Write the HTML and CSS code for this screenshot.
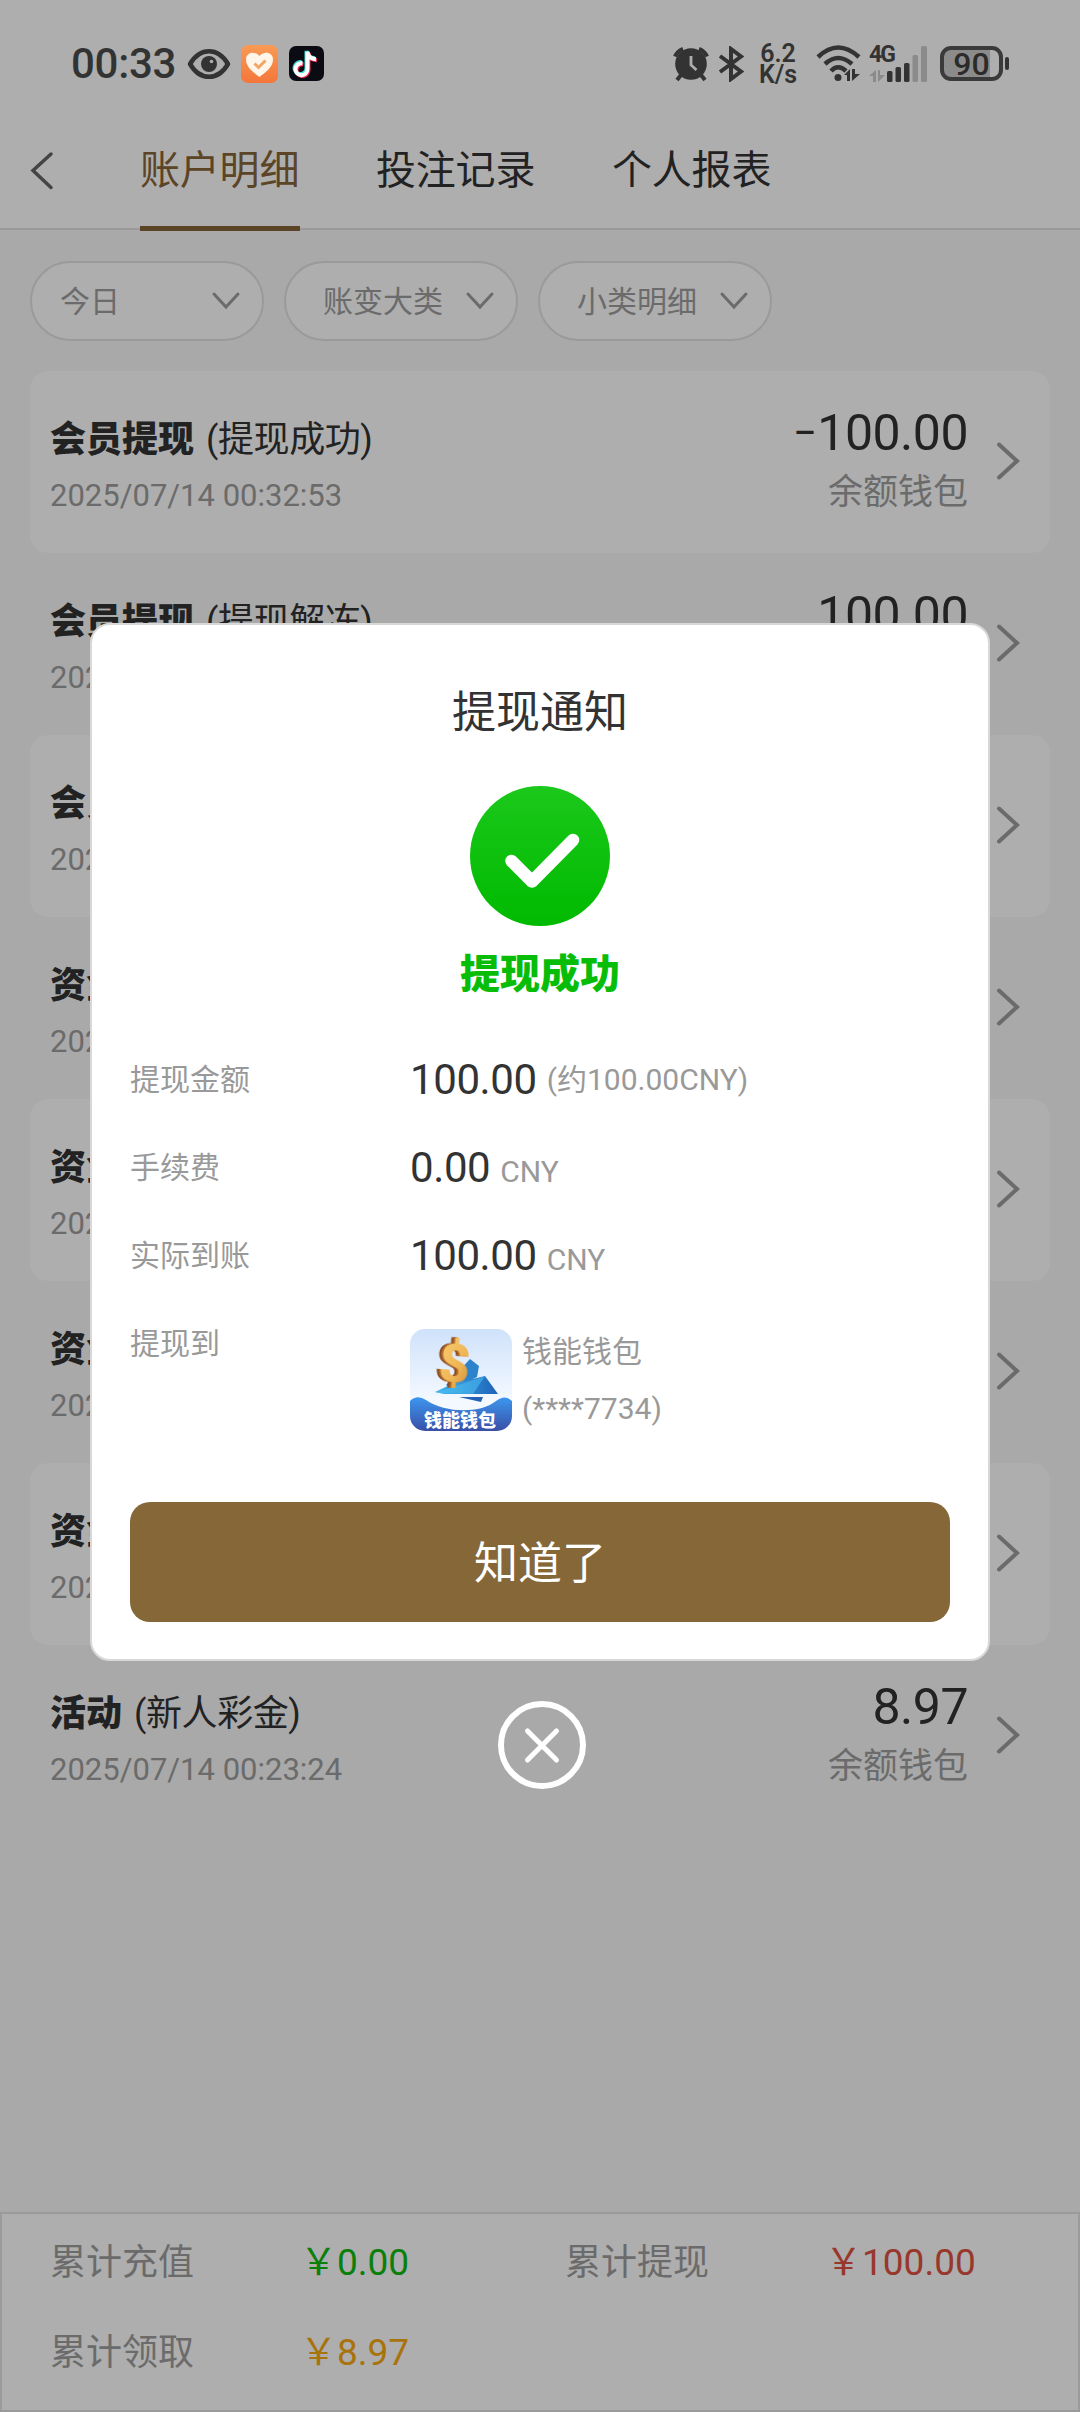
FILE: index.html
```html
<!DOCTYPE html>
<html lang="zh-CN">
<head>
<meta charset="utf-8">
<title>账户明细</title>
<link rel="stylesheet" href="styles.css">
</head>
<body>
<svg width="0" height="0" class="defs">
  <symbol id="chev-right" viewBox="0 0 24 40"><path d="M3 3.5 L21 20 L3 36.500"/></symbol>
  <symbol id="chev-down" viewBox="0 0 30 20"><path d="M3 3 L15 16 L27 3"/></symbol>
</svg>
<div class="screen">
  <header class="top">
    <div class="status">
      <span class="clock">00:33</span>
      <svg class="eye" width="44" height="30" viewBox="0 0 44 30"><path d="M3 15 C13 -2 31 -2 41 15 C31 32 13 32 3 15 Z" fill="none" stroke="#333" stroke-width="4.500" stroke-linejoin="round"/><circle cx="22" cy="15" r="8" fill="#333"/><circle cx="24.500" cy="12.500" r="1.800" fill="#aeaeae"/></svg>
      <svg class="health" width="38" height="38" viewBox="0 0 38 38"><defs><linearGradient id="og" x2="0" y2="1"><stop stop-color="#f89a55"/><stop offset="1" stop-color="#f4763a"/></linearGradient></defs><rect width="37" height="38" rx="7" fill="url(#og)"/><path d="M18.500 32 C12 27 5 22 5 14.500 C5 7 14 5.500 18.500 11 C23 5.500 32 7 32 14.500 C32 22 25 27 18.500 32 Z" fill="#fff5e8"/><path d="M13.500 18.500 L17.500 22.500 L24.500 15.500" fill="none" stroke="#f3a564" stroke-width="3"/></svg>
      <svg class="note" width="35" height="35" viewBox="0 0 35 35"><rect width="35" height="35" rx="7" fill="#0b0b14"/><g fill="none" stroke-width="4"><path d="M18 5.500 V23 A6 6 0 1 1 13 17 M18 5.500 Q19 12.500 26.500 13" stroke="#3ee0dc" transform="translate(-.5 -.8)"/><path d="M18 5.500 V23 A6 6 0 1 1 13 17 M18 5.500 Q19 12.500 26.500 13" stroke="#ee2c55" transform="translate(1.500 1.300)"/><path d="M18 5.500 V23 A6 6 0 1 1 13 17 M18 5.500 Q19 12.500 26.500 13" stroke="#fff" transform="translate(.5 .3)"/></g></svg>
      <span class="fill"></span>
      <svg width="36" height="36" viewBox="0 0 36 36"><g fill="none" stroke="#333" stroke-width="4"><path d="M2 10.500 A14 14 0 0 1 10 2.800"/><path d="M34 10.500 A14 14 0 0 0 26 2.800"/><path d="M8 29 L4 34 M28 29 L32 34"/></g><circle cx="18" cy="18" r="15.800" fill="#333"/><path d="M18 10 V19 L23.500 24" fill="none" stroke="#aeaeae" stroke-width="2.800"/></svg>
      <svg class="bt" width="26" height="36" viewBox="0 0 26 36"><path d="M2 10 L23 25.500 L13 33 V3 L23 10.500 L2 26" fill="none" stroke="#333" stroke-width="4"/></svg>
      <span class="speed"><span>6.2</span><span>K/s</span></span>
      <svg class="wifi" width="46" height="37" viewBox="0 0 46 37"><g fill="none" stroke="#333" stroke-width="4.500"><path d="M2 12 Q22 -7 43 12"/><path d="M9 19 Q22 7 36 19"/><path d="M15 26 Q22 18.500 30 26"/></g><circle cx="22" cy="32.500" r="3.500" fill="#333"/><path d="M28 30 L34 24 V36 H31 V30 Z M36 24 H39 V29 H44 L36 36 Z" fill="#333"/></svg>
      <div class="cell"><svg width="62" height="36" viewBox="0 0 62 36"><path d="M1 30 L8 24 V36 H5 V30 Z M10 24 H12 V29 H17 L10 36 Z" fill="#8b8b8b"/><g fill="#333"><rect x="19" y="25" width="5.500" height="11" rx="1.500"/><rect x="27.500" y="21" width="5.500" height="15" rx="1.500"/><rect x="36" y="17" width="5.500" height="19" rx="1.500"/></g><g fill="#8b8b8b"><rect x="44.500" y="9" width="5.500" height="27" rx="1.500"/><rect x="53" y="0" width="6" height="36" rx="1.500"/></g></svg><span class="gen">4G</span></div>
      <div class="battery"><span class="level">90</span><i class="cap"></i></div>
    </div>
    <nav class="tabs">
      <svg class="back" width="26" height="40" viewBox="0 0 26 40"><path d="M23 3 L5 19.500 L23 36.500"/></svg>
      <span class="tab active">账户明细</span>
      <span class="tab">投注记录</span>
      <span class="tab">个人报表</span>
    </nav>
  </header>
  <div class="filters">
    <div class="pill wide"><span>今日</span><svg class="down"><use href="#chev-down"/></svg></div>
    <div class="pill"><span>账变大类</span><svg class="down"><use href="#chev-down"/></svg></div>
    <div class="pill"><span>小类明细</span><svg class="down"><use href="#chev-down"/></svg></div>
  </div>
  <main class="list">
    <div class="row"><div class="info"><div class="title"><b>会员提现</b><span>(提现成功)</span></div><div class="date">2025/07/14 00:32:53</div></div><div class="sum"><div class="amount"><span class="minus">−</span>100.00</div><div class="wallet">余额钱包</div></div><svg class="go"><use href="#chev-right"/></svg></div>
    <div class="row"><div class="info"><div class="title"><b>会员提现</b><span>(提现解冻)</span></div><div class="date">2025/07/14</div></div><div class="sum"><div class="amount">100.00</div></div><svg class="go"><use href="#chev-right"/></svg></div>
    <div class="row"><div class="info"><div class="title"><b>会员提现</b></div><div class="date">2025/07/14</div></div><svg class="go"><use href="#chev-right"/></svg></div>
    <div class="row"><div class="info"><div class="title"><b>资金</b></div><div class="date">2025/07/14</div></div><svg class="go"><use href="#chev-right"/></svg></div>
    <div class="row"><div class="info"><div class="title"><b>资金</b></div><div class="date">2025/07/14</div></div><svg class="go"><use href="#chev-right"/></svg></div>
    <div class="row"><div class="info"><div class="title"><b>资金</b></div><div class="date">2025/07/14</div></div><svg class="go"><use href="#chev-right"/></svg></div>
    <div class="row"><div class="info"><div class="title"><b>资金</b></div><div class="date">2025/07/14</div></div><svg class="go"><use href="#chev-right"/></svg></div>
    <div class="row"><div class="info"><div class="title"><b>活动</b><span>(新人彩金)</span></div><div class="date">2025/07/14 00:23:24</div></div><div class="sum"><div class="amount">8.97</div><div class="wallet">余额钱包</div></div><svg class="go"><use href="#chev-right"/></svg></div>
  </main>
  <footer class="totals">
    <span>累计充值</span><span class="green">￥0.00</span><span>累计提现</span><span class="red">￥100.00</span>
    <span>累计领取</span><span class="orange">￥8.97</span>
  </footer>
</div>

<div class="overlay">
  <section class="modal">
    <h1>提现通知</h1>
    <svg class="ok" width="140" height="140" viewBox="0 0 140 140"><defs><linearGradient id="gr" x2="0" y2="1"><stop stop-color="#1bc81b"/><stop offset="1" stop-color="#00ba00"/></linearGradient></defs><circle cx="70" cy="70" r="70" fill="url(#gr)"/><path d="M41.500 75 L62 95.500 L103 54" fill="none" stroke="#fff" stroke-width="12.500" stroke-linecap="round" stroke-linejoin="round"/></svg>
    <div class="result">提现成功</div>
    <dl class="details">
      <dt>提现金额</dt><dd><span class="num">100.00</span><span class="approx">(约100.00CNY)</span></dd>
      <dt>手续费</dt><dd><span class="num">0.00</span><span class="unit">CNY</span></dd>
      <dt>实际到账</dt><dd><span class="num">100.00</span><span class="unit">CNY</span></dd>
      <dt>提现到</dt>
      <dd class="target">
        <svg width="102" height="102" viewBox="0 0 102 102">
          <defs>
            <clipPath id="ic"><rect width="102" height="102" rx="15"/></clipPath>
            <linearGradient id="sky" x2="0" y2="1"><stop stop-color="#cfe2fb"/><stop offset=".7" stop-color="#f4f9ff"/></linearGradient>
            <linearGradient id="sea" x2="0" y2="1"><stop stop-color="#3c97ef"/><stop offset="1" stop-color="#3a4fa6"/></linearGradient>
            <linearGradient id="wing" x2="1" y2="0"><stop stop-color="#42b7ee"/><stop offset="1" stop-color="#1d62b8"/></linearGradient>
            <linearGradient id="gold" x2="1" y2="1"><stop stop-color="#f7ce74"/><stop offset=".6" stop-color="#efb554"/><stop offset="1" stop-color="#c9852f"/></linearGradient>
          </defs>
          <g clip-path="url(#ic)">
            <rect width="102" height="102" fill="url(#sky)"/>
            <path d="M60 30 L69 37 L67 48 L42 60 L36 56 Z" fill="#2b83cc"/>
            <path d="M25 63 L42 55 L75 47 L88 65 L34 65 Z" fill="url(#wing)"/>
            <path d="M25 64 L75 47 L63 65 Z" fill="#4cc0f3" opacity=".55"/>
            <text class="dollar" x="29" y="53" transform="rotate(4 45 34)">$</text>
            <path d="M49 68 H73 L71 73 Z" fill="#2461b4"/>
            <path d="M0 72 Q7 65 16 71 C36 85 72 84 86 72 Q95 65 102 72 V102 H0 Z" fill="url(#sea)"/>
            <text class="badge" x="14" y="98">钱能钱包</text>
          </g>
        </svg>
        <div class="account"><span>钱能钱包</span><span>(****7734)</span></div>
      </dd>
    </dl>
    <button class="confirm">知道了</button>
  </section>
  <svg class="close" width="88" height="88" viewBox="0 0 88 88"><circle cx="44" cy="44" r="41" stroke-width="6"/><path d="M29.500 30 L58.500 59 M58.500 30 L29.500 59" stroke-width="5" stroke-linecap="round"/></svg>
</div>
</body>
</html>
```
FILE: styles.css
```css
* { box-sizing: border-box; }
body {
  margin: 0;
  width: 1080px;
  height: 2412px;
  position: relative;
  overflow: hidden;
  font-family: Roboto, "Noto Sans CJK SC", sans-serif;
  color: #222;
}
svg { display: block; flex: none; }
.defs { position: absolute; }
.screen {
  height: 2412px;
  display: flex;
  flex-direction: column;
  background: #a9a9a9;
}
.top {
  height: 230px;
  background: #aeaeae;
  border-bottom: 2px solid #9a9a9a;
}

/* status bar */
.status {
  height: 127px;
  padding: 0 77px 0 71px;
  display: flex;
  align-items: center;
  color: #333;
}
.clock { font-size: 42px; font-weight: 500; line-height: 50px; letter-spacing: -0.3px; }
.eye { margin-left: 11px; }
.health { margin-left: 10px; }
.note { margin-left: 10px; }
.fill { flex: 1; }
.bt { margin-left: 9px; }
.speed {
  margin-left: 13px;
  width: 42px;
  display: flex;
  flex-direction: column;
  align-items: center;
  font-size: 25px;
  font-weight: 600;
  line-height: 21px;
}
.speed span { height: 21px; }
.wifi { margin-left: 17px; }
.cell { margin-left: 6px; position: relative; }
.gen {
  position: absolute;
  left: 1px;
  top: -2px;
  font-size: 23px;
  line-height: 22px;
  font-weight: 700;
  letter-spacing: -2px;
}
.battery {
  position: relative;
  margin-left: 10px;
  width: 63px;
  height: 35px;
  border: 4px solid #3a3a3a;
  border-radius: 11px;
  background: linear-gradient(90deg, #8b8b8b 46px, #aeaeae 46px);
}
.level {
  display: block;
  text-align: center;
  font-size: 32px;
  line-height: 28px;
  font-weight: 500;
  color: #2b2b2b;
}
.cap {
  position: absolute;
  right: -10px;
  top: 7px;
  width: 4px;
  height: 13px;
  border-radius: 2px;
  background: #333;
}

/* tabs */
.tabs { height: 104px; padding-left: 28px; display: flex; }
.back { margin: 24px 86px 0 0; fill: none; stroke: #444; stroke-width: 3.5; stroke-linecap: round; }
.tab {
  margin-right: 76px;
  height: 104px;
  padding-top: 19px;
  font-size: 40px;
  line-height: 50px;
  letter-spacing: -0.2px;
  width: 160px;
  white-space: nowrap;
}
.active { color: #5c4426; border-bottom: 5px solid #5c4426; }

/* filters */
.filters { margin: 31px 30px 30px; display: flex; gap: 20px; }
.pill {
  width: 234px;
  height: 80px;
  padding: 0 21px 4px 37px;
  display: flex;
  align-items: center;
  justify-content: space-between;
  border: 2px solid #9a9a9a;
  border-radius: 40px;
  background: #aeaeae;
  color: #6b6b6b;
  font-size: 30px;
}
.wide { padding-left: 28px; }
.down { width: 30px; height: 20px; margin-top: 3px; fill: none; stroke: #6b6b6b; stroke-width: 3; stroke-linecap: round; }

/* records */
.list { margin: 0 30px; }
.row { height: 182px; padding-left: 20px; display: flex; border-radius: 18px; }
.row:nth-child(odd) { background: #aeaeae; }
.info { flex: 1; padding-top: 44px; }
.title { display: flex; gap: 12px; font-size: 36px; line-height: 50px; }
.title b { font-weight: 900; }
.title span { letter-spacing: -0.4px; }
.date { margin-top: 11px; font-size: 31px; line-height: 40px; color: #6b6b6b; }
.sum { padding-top: 32px; text-align: right; }
.amount { font-size: 50px; line-height: 60px; letter-spacing: -0.5px; }
.minus { font-size: 42px; margin-right: 1px; vertical-align: 3px; line-height: 1; }
.wallet { margin-top: 8px; font-size: 35px; line-height: 44px; color: #6b6b6b; }
.go {
  width: 24px;
  height: 40px;
  margin: 70px 30px 0 28px;
  fill: none;
  stroke: #6b6b6b;
  stroke-width: 4;
  stroke-linecap: round;
}

/* totals */
.totals {
  margin-top: auto;
  height: 200px;
  padding: 0 48px 18px;
  display: grid;
  grid-template-columns: 250px 265px 260px 1fr;
  grid-template-rows: 90px 90px;
  align-items: center;
  border: 2px solid #9a9a9a;
  background: #aeaeae;
  color: #6b6b6b;
  font-size: 36px;
}
.green, .red, .orange { font-size: 37px; }
.green { color: #0a7f0a; }
.red { color: #98372c; }
.orange { color: #a8730b; }

/* dialog */
.overlay {
  position: absolute;
  inset: 0;
  padding-top: 623px;
  display: flex;
  flex-direction: column;
  align-items: center;
}
.modal {
  width: 900px;
  height: 1038px;
  padding: 58px 38px 0;
  display: flex;
  flex-direction: column;
  align-items: center;
  border: 2px solid #d8d8d8;
  border-radius: 20px;
  background: #fff;
  color: #333;
}
.modal h1 { margin: 0; font-size: 44px; line-height: 60px; font-weight: 400; }
.ok { margin-top: 43px; }
.result { margin-top: 24px; font-size: 40px; line-height: 50px; font-weight: 900; color: #08bd08; }
.details {
  margin: 36px 0 0;
  width: 820px;
  display: grid;
  grid-template-columns: 280px 1fr;
  grid-template-rows: 88px 88px 88px 202px;
  line-height: 88px;
  font-size: 30px;
  color: #999;
}
.details dd { margin: 0; display: flex; align-items: baseline; }
.num { font-size: 42px; letter-spacing: -0.4px; color: #333; margin-right: 10px; }
.approx { margin-top: -8px; align-self: flex-start; padding-top: 8px; }
.details .target { align-items: flex-start; gap: 10px; padding-top: 29px; }
.account { display: flex; flex-direction: column; line-height: 57px; margin-top: -6px; }
.dollar {
  font: 900 54px Roboto, sans-serif;
  fill: url(#gold);
  filter: drop-shadow(-1.5px 0.3px 0 #b06a2c) drop-shadow(-1.5px 0.3px 0 #8d4b1f);
}
.badge { font: 900 18px "Noto Sans CJK SC", sans-serif; fill: #fff; }
.confirm {
  width: 820px;
  height: 120px;
  padding: 3px 0 0;
  border: 0;
  border-radius: 20px;
  background: #856738;
  color: #fff;
  font: 44px/60px Roboto, "Noto Sans CJK SC", sans-serif;
}
.close { margin: 40px 0 0 4px; fill: none; stroke: #fff; }
```
